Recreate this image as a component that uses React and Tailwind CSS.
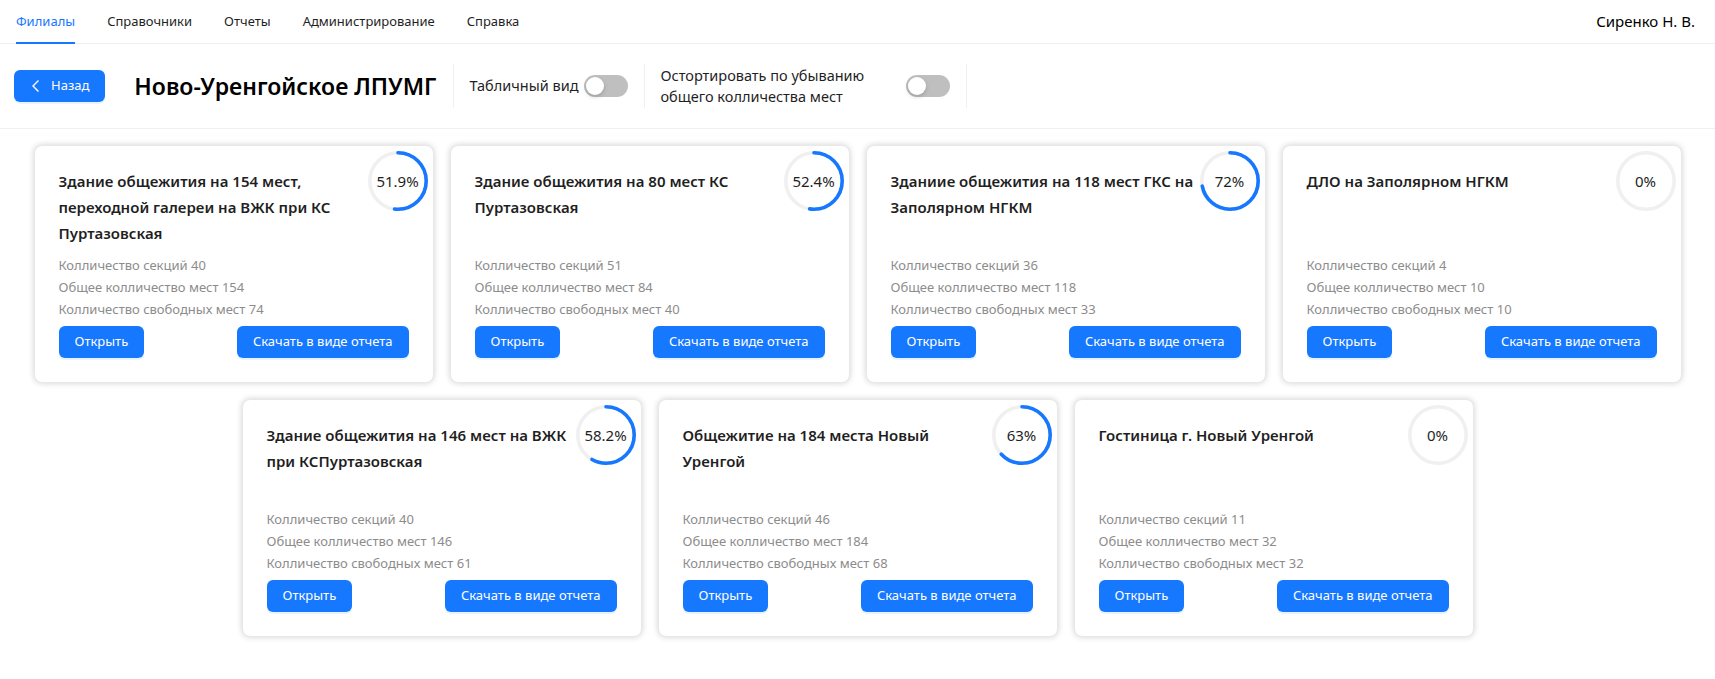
import { useState } from "react";

const cards = [
  { title: "Здание общежития на 154 мест, переходной галереи на ВЖК при КС Пуртазовская", percent: 51.9, sections: 40, total: 154, free: 74 },
  { title: "Здание общежития на 80 мест КС Пуртазовская", percent: 52.4, sections: 51, total: 84, free: 40 },
  { title: "Зданиие общежития на 118 мест ГКС на Заполярном НГКМ", percent: 72, sections: 36, total: 118, free: 33 },
  { title: "ДЛО на Заполярном НГКМ", percent: 0, sections: 4, total: 10, free: 10 },
  { title: "Здание общежития на 146 мест на ВЖК при КСПуртазовская", percent: 58.2, sections: 40, total: 146, free: 61 },
  { title: "Общежитие на 184 места Новый Уренгой", percent: 63, sections: 46, total: 184, free: 68 },
  { title: "Гостиница г. Новый Уренгой", percent: 0, sections: 11, total: 32, free: 32 },
];

const menu = ["Филиалы", "Справочники", "Отчеты", "Администрирование", "Справка"];

function Progress({ percent }) {
  const size = 60;
  const stroke = 3.6;
  const r = (size - stroke) / 2;
  const c = 2 * Math.PI * r;
  const len = (c * percent) / 100;
  return (
    <div className="relative w-[60px] h-[60px]">
      <svg width={size} height={size} className="-rotate-90">
        <circle cx={size / 2} cy={size / 2} r={r} fill="none" stroke="#f0f0f0" strokeWidth={stroke} />
        {percent > 0 && (
          <circle
            cx={size / 2}
            cy={size / 2}
            r={r}
            fill="none"
            stroke="#1677ff"
            strokeWidth={stroke}
            strokeLinecap="round"
            strokeDasharray={`${len} ${c}`}
          />
        )}
      </svg>
      <span className="absolute inset-0 flex items-center justify-center text-[15px] text-[#1f1f1f]">
        {percent}%
      </span>
    </div>
  );
}

function Switch() {
  const [on, setOn] = useState(false);
  return (
    <button
      type="button"
      onClick={() => setOn(!on)}
      className={`relative w-[44px] h-[22px] rounded-full shrink-0 ${on ? "bg-[#1677ff]" : "bg-[#bfbfbf]"}`}
    >
      <span
        className={`absolute top-[2px] w-[18px] h-[18px] rounded-full bg-white shadow-[0_2px_4px_rgba(0,35,11,0.2)] ${on ? "left-[24px]" : "left-[2px]"}`}
      />
    </button>
  );
}

function Card({ card }) {
  return (
    <div className="relative w-[400px] h-[238px] rounded-lg border border-[#e8e8e8] bg-white shadow-[0_0_6px_rgba(0,0,0,0.18)] px-6 pt-[22px] pb-6 flex flex-col">
      <div className="absolute top-[5px] right-[5px]">
        <Progress percent={card.percent} />
      </div>
      <h4 className="w-[306px] text-[15px] leading-[26px] font-semibold text-[#1f1f1f]">{card.title}</h4>
      <div className="mt-auto text-[13px] leading-[22px] text-[#8c8c8c]">
        <div>Колличество секций {card.sections}</div>
        <div>Общее колличество мест {card.total}</div>
        <div>Колличество свободных мест {card.free}</div>
      </div>
      <div className="mt-1.5 flex justify-between">
        <button className="h-8 px-4 rounded-md bg-[#1677ff] text-white text-[13px] shadow-[0_2px_0_rgba(5,145,255,0.1)]">
          Открыть
        </button>
        <button className="h-8 px-4 rounded-md bg-[#1677ff] text-white text-[13px] shadow-[0_2px_0_rgba(5,145,255,0.1)]">
          Скачать в виде отчета
        </button>
      </div>
    </div>
  );
}

export default function App() {
  const [active, setActive] = useState(0);

  return (
    <div className="min-h-screen bg-white font-['Noto_Sans',sans-serif] text-[#1f1f1f]">
      <header className="h-[44px] flex items-stretch justify-between border-b border-[#f0f0f0]">
        <nav className="flex items-stretch">
          {menu.map((item, i) => (
            <button
              key={item}
              onClick={() => setActive(i)}
              className={`relative px-4 text-[13px] ${i === active ? "text-[#1677ff]" : "text-[#1f1f1f]"}`}
            >
              {item}
              {i === active && <span className="absolute left-4 right-4 -bottom-px h-[2px] bg-[#1677ff]" />}
            </button>
          ))}
        </nav>
        <div className="flex items-center pr-5 text-[15px] text-black">Сиренко Н. В.</div>
      </header>

      <div className="h-[85px] flex items-center pl-[14px] border-b border-[#f0f0f0]">
        <button className="h-8 pl-[15px] pr-[16px] flex items-center gap-2 rounded-md bg-[#1677ff] text-white text-[13px] shadow-[0_2px_0_rgba(5,145,255,0.1)]">
          <svg width="14" height="14" viewBox="0 0 14 14" fill="none" stroke="currentColor" strokeWidth="1.4">
            <path d="M9.5 1.5 L4 7 L9.5 12.5" />
          </svg>
          Назад
        </button>
        <h3 className="ml-[29px] text-[23px] font-semibold text-black">Ново-Уренгойское ЛПУМГ</h3>
        <div className="ml-4 w-px h-[44px] bg-[#f0f0f0]" />
        <div className="px-4 flex items-center gap-[5px]">
          <span className="text-[14.5px]">Табличный вид</span>
          <Switch />
        </div>
        <div className="w-px h-[44px] bg-[#f0f0f0]" />
        <div className="px-4 flex items-center gap-5">
          <span className="w-[225px] text-[14.5px] leading-[21px]">Остортировать по убыванию общего колличества мест</span>
          <Switch />
        </div>
        <div className="w-px h-[44px] bg-[#f0f0f0]" />
      </div>

      <main className="pt-4 pb-8 flex flex-wrap justify-center gap-4">
        {cards.map((card) => (
          <Card key={card.title} card={card} />
        ))}
      </main>
    </div>
  );
}
